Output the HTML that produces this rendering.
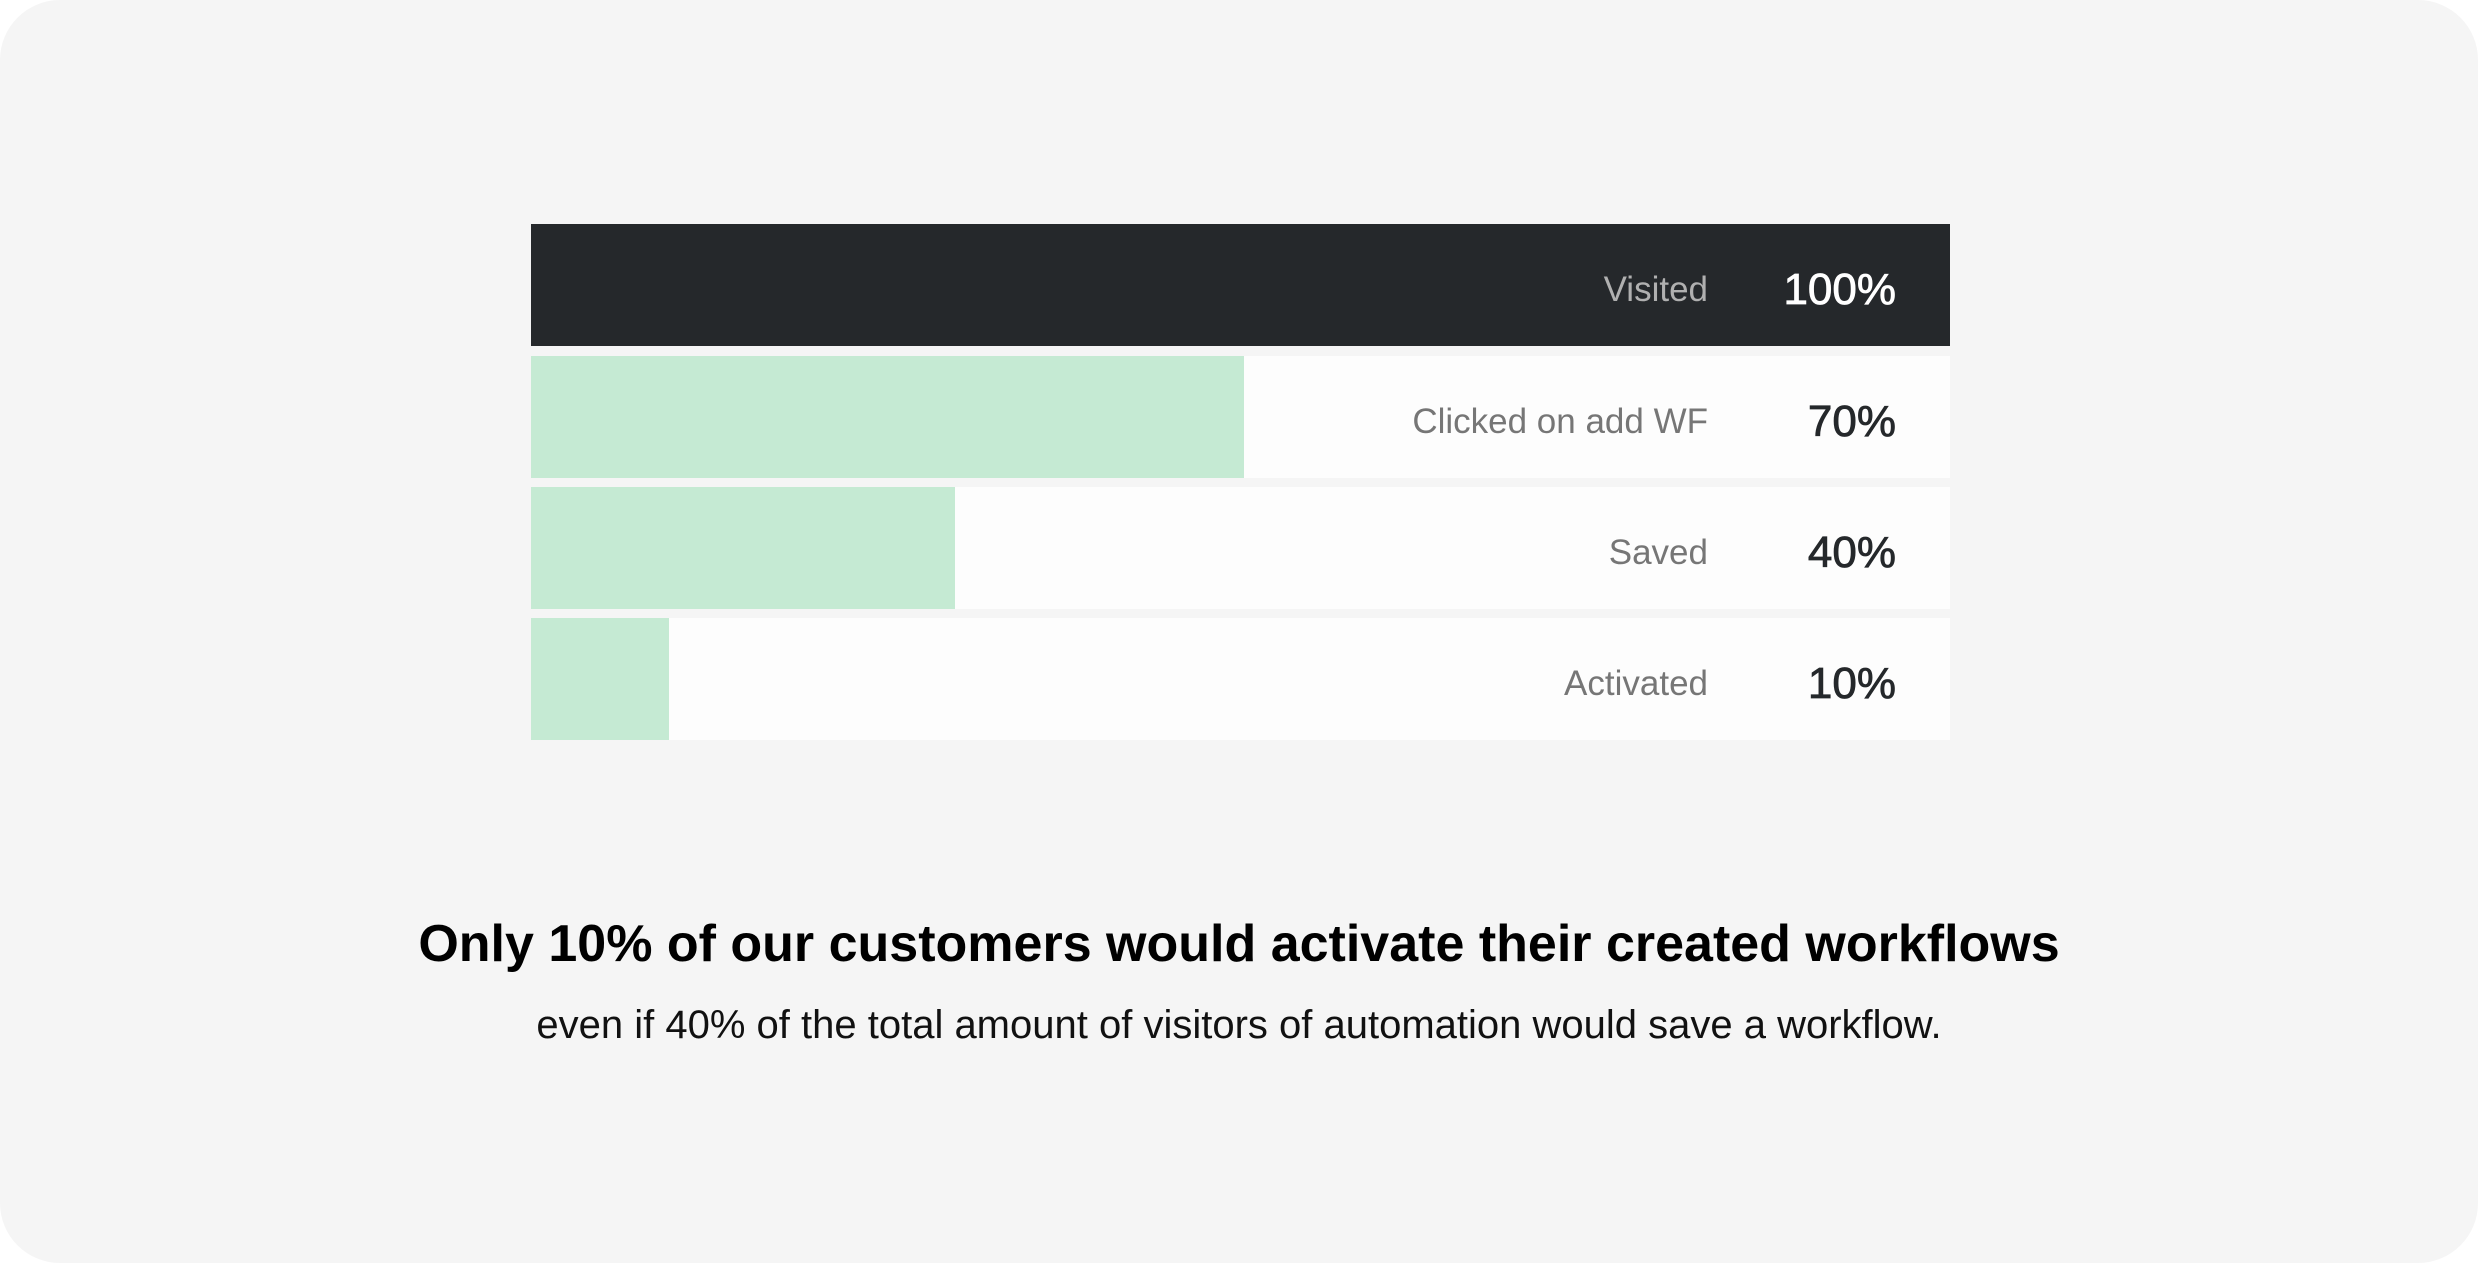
<!DOCTYPE html>
<html><head><style>
html,body{margin:0;padding:0;background:#fff;}
.card{position:absolute;left:0;top:0;width:2478px;height:1263px;background:#f5f5f5;border-radius:60px;overflow:hidden;font-family:"Liberation Sans",sans-serif;}
.row{position:absolute;left:531px;width:1419px;height:122px;background:#fdfdfd;}
.fill{position:absolute;left:0;top:0;height:100%;background:#c5ead3;}
.lab{position:absolute;right:242px;top:5px;line-height:122px;font-size:35px;color:#767676;}
.pct{position:absolute;right:54px;top:5px;line-height:122px;font-size:44px;color:#25282b;-webkit-text-stroke:0.8px currentColor;}
h1{position:absolute;left:0;width:2478px;top:914px;margin:0;text-align:center;font-size:52px;font-weight:bold;color:#000;}
p{position:absolute;left:0;width:2478px;top:1003px;margin:0;text-align:center;font-size:40px;color:#111;}
</style></head><body>
<div class="card">
<div class="row" style="top:224px;background:#25282b;height:122px"><div class="lab" style="color:#b0b0b0">Visited</div><div class="pct" style="color:#fff">100%</div></div>
<div class="row" style="top:356px"><div class="fill" style="width:713px"></div><div class="lab">Clicked on add WF</div><div class="pct">70%</div></div>
<div class="row" style="top:487px"><div class="fill" style="width:424px"></div><div class="lab">Saved</div><div class="pct">40%</div></div>
<div class="row" style="top:618px"><div class="fill" style="width:138px"></div><div class="lab">Activated</div><div class="pct">10%</div></div>
<h1>Only 10% of our customers would activate their created workflows</h1>
<p>even if 40% of the total amount of visitors of automation would save a workflow.</p>
</div>
</body></html>
